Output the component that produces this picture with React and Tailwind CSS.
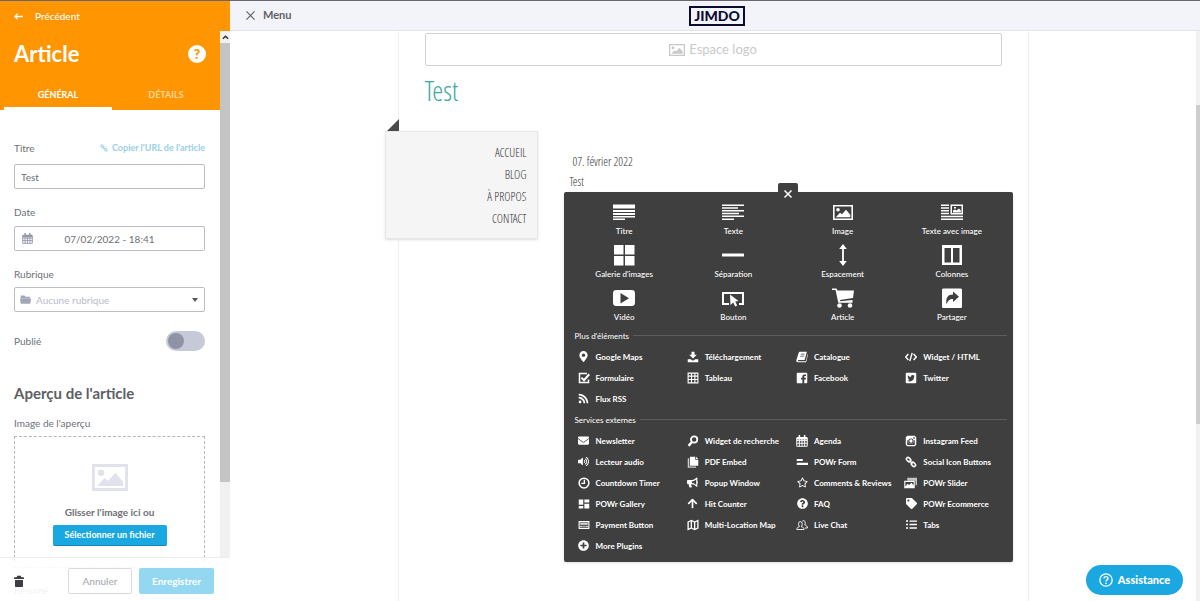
import {
  FaArrowUp,
  FaBullhorn,
  FaEnvelope,
  FaListUl,
  FaMapMarkerAlt,
  FaPlusCircle,
  FaQuestionCircle,
  FaRegStar,
  FaRss,
  FaTag,
  FaVolumeUp,
} from "react-icons/fa";

function Svg({ box = "0 0 16 16", className = "w-3 h-3", children }) {
  return (
    <svg viewBox={box} className={className} fill="currentColor" aria-hidden="true">
      {children}
    </svg>
  );
}

const line = { fill: "none", stroke: "currentColor" };

/* Small icons */
const CheckIcon = () => (
  <Svg>
    <path {...line} strokeWidth="2" d="M12 2H2v12h12v-4" />
    <path {...line} strokeWidth="2.6" d="M4.5 7.5 8 11l7-8" />
  </Svg>
);
const DownloadIcon = () => (
  <Svg>
    <path d="M6 1h4v4h3L8 10 3 5h3zM1 11h4l3 2 3-2h4v4H1z" />
  </Svg>
);
const GridIcon = () => (
  <Svg>
    <path {...line} strokeWidth="1.5" d="M1.5 1.5h13v13h-13zM1.5 5.5h13M1.5 10h13M6 1.5v13M10.500 1.500v13" />
  </Svg>
);
const BookIcon = () => (
  <Svg>
    <path fillRule="evenodd" d="M5 1h9.500L11.500 12H3.200c-1 0-1 1.500 0 1.500H13L15.500 4l.5.5L13.500 15H2.500C.8 15 0 13.500.5 12L3.500 2.500C3.800 1.500 4.300 1 5 1zM6.500 3.500 6.200 4.800h5.200l.4-1.300zM5.800 6.200l-.3 1.200h5.200l.3-1.200z" />
  </Svg>
);
const CodeIcon = () => (
  <Svg>
    <path {...line} strokeWidth="1.900" d="M4.500 4 1 8l3.500 4M11.500 4 15 8l-3.500 4M9.600 2.500 6.400 13.500" />
  </Svg>
);
const FacebookIcon = () => (
  <Svg>
    <path fillRule="evenodd" d="M2.500 1h11C14.500 1 15 1.500 15 2.500v11c0 1-.5 1.500-1.500 1.500H11v-5h2l.3-2.200H11V6.500c0-.8.300-1.200 1.200-1.200h1.200V3.200h-2C9.500 3.200 8.500 4.300 8.500 6v1.800H6.700V10h1.800v5h-6C1.500 15 1 14.500 1 13.500v-11C1 1.500 1.500 1 2.500 1z" />
  </Svg>
);
const TwitterIcon = () => (
  <Svg>
    <path fillRule="evenodd" d="M2 1h12l1 1v12l-1 1H2l-1-1V2zM13 5l-1.200.2.8-1.200-1.400.6c-1.700-1.400-3.600.1-3.200 2C6.300 6.500 5 5.700 4 4.400c-.7 1.200-.3 2.300.6 3L3.500 7.200c.1 1 .8 1.800 1.800 2.100l-.9.1c.3.800 1 1.300 1.900 1.300-.9.700-1.900 1-3.300.9 4.500 2.500 9.300-.4 9-5.300z" />
  </Svg>
);
const SearchIcon = () => (
  <Svg>
    <circle {...line} strokeWidth="2.400" cx="9.500" cy="6" r="4.200" />
    <path {...line} strokeWidth="3" d="M6.500 9.500 2 14.500" />
  </Svg>
);
const CalendarIcon = ({ className }) => (
  <Svg className={className}>
    <path {...line} strokeWidth="1.300" d="M1 4h14v11H1zM1 7.500h14M1 11h14M4.500 5v10M8 5v10M11.500 5v10" />
    <path d="M1 2.500h14V6H1zM3.500 0h2v3h-2zM10.500 0h2v3h-2z" />
  </Svg>
);
const InstagramIcon = () => (
  <Svg>
    <path fillRule="evenodd" d="M3 1h10l2 2v10l-2 2H3l-2-2V3zM11 3v2h2V3zM8 4.500a3.500 3.500 0 1 0 0 7 3.500 3.500 0 0 0 0-7zM3 7v5.500c0 .5.200.7.700.7h8.600c.5 0 .7-.2.700-.7V7h-1.200c.8 3-1.300 5-3.800 5S3.600 10 4.300 7z" />
    <circle cx="8" cy="8" r="2.200" />
  </Svg>
);
const PdfIcon = () => (
  <Svg>
    <path d="M4 1h7v4h4v8H4z" />
    <path d="M12 1l3 3h-3z" />
    <path d="M1 3h2v11h9v1.500H1z" opacity=".75" />
  </Svg>
);
const FormIcon = () => (
  <Svg>
    <path d="M1 4h8v2.500H1zM1 9h15v3H1z" />
  </Svg>
);
const LinkIcon = ({ className }) => (
  <Svg className={className}>
    <rect {...line} strokeWidth="2" x="-3.200" y="-2.100" width="6.400" height="4.200" rx="2" transform="translate(4.800 4.800) rotate(45)" />
    <rect {...line} strokeWidth="2" x="-3.200" y="-2.100" width="6.400" height="4.200" rx="2" transform="translate(11.200 11.200) rotate(45)" />
    <path {...line} strokeWidth="1.800" d="m6 6 4 4" />
  </Svg>
);
const ClockIcon = () => (
  <Svg>
    <circle {...line} strokeWidth="2" cx="8" cy="8" r="6.500" />
    <path {...line} strokeWidth="1.800" d="M8.500 3.500v5H4.500" />
  </Svg>
);
const SliderIcon = () => (
  <Svg box="0 0 18 16" className="w-[14px] h-3">
    <path d="M4 1h13v10h-2V5H4z" opacity=".7" />
    <path fillRule="evenodd" d="M0 5h14v10H0zM1.500 6.500v6l3-3.500 2 1.500 3-3 3 3.500V6.500z" />
  </Svg>
);
const DashboardIcon = () => (
  <Svg>
    <path d="M1 2h6v7H1zM8.500 2H15v4H8.500zM1 10.500h6V14H1zM8.500 7.500H15V14H8.500z" />
  </Svg>
);
const KeyboardIcon = () => (
  <Svg>
    <path {...line} strokeWidth="1.500" d="M1.500 3.500h13v9h-13z" />
    <path d="M3 5h10v2.500H3zM3 9h3v1.500H3zM7 9h2v1.500H7zM10 9h3v1.500h-3z" opacity=".8" />
  </Svg>
);
const MapIcon = () => (
  <Svg>
    <path {...line} strokeWidth="1.800" d="M1.500 4 5.800 2l4.400 2 4.300-2v10l-4.300 2-4.400-2-4.300 2zM5.800 2v10M10.200 4v10" />
  </Svg>
);
const PeopleIcon = () => (
  <Svg>
    <path {...line} strokeWidth="1.200" d="M1 14c0-2.500 1.500-3 3.500-3.700C2.500 7 3 3.500 5.800 3.500s3.300 3.500 1.400 6.800c2 .7 3.600 1.200 3.600 3.700zM8.500 2.800c2.500-1.800 5 .7 3.300 5 1.800.8 3.500 1.500 3.500 4.200H12" />
  </Svg>
);

/* Big icons */
const Picture = ({ className }) => (
  <Svg box="0 0 20 15" className={className}>
    <path fillRule="evenodd" d="M0 0h20v15H0zM1.600 1.600v11.800h16.800V1.600z" />
    <circle cx="5" cy="4.800" r="1.800" />
    <path d="M2.800 12.200 7 7.800l2 1.500 4-4.500 4.300 5v2.400z" />
  </Svg>
);
const big = "w-[22px] h-[22px]";
const TitleIcon = () => (
  <Svg box="0 0 22 22" className={big}>
    <path d="M0 3.500h22v4H0zM0 9h22v2H0zM0 12h22v2H0zM0 15h22v1.500H0zM0 17.500h12v1.500H0z" />
  </Svg>
);
const TextIcon = () => (
  <Svg box="0 0 22 22" className={big}>
    <path d="M0 3.500h22V5H0zM0 6.300h16v1.500H0zM0 9h22v1.500H0zM0 11.800h17v1.500H0zM0 14.600h22v1.500H0zM0 17.500h12V19H0z" />
  </Svg>
);
const PictureIcon = () => (
  <span className="flex items-center h-[22px]">
    <Picture className="w-5 h-[15px]" />
  </span>
);
const TextPictureIcon = () => (
  <Svg box="0 0 22 22" className={big}>
    <path d="M0 3.500h8V5H0zM0 6.300h8v1.500H0zM0 9h8v1.500H0zM0 11.800h8v1.500H0zM0 14.800h22v1.500H0zM0 17.500h22V19H0z" />
    <path fillRule="evenodd" d="M9.500 3.500H22v10H9.500zM11 5v7h9.500V5z" />
    <path d="M12 11.500v-2l2-1 1.500 1L18 7.500l1.800 2v2zM13 6h2v1.500h-2z" />
  </Svg>
);
const GalleryIcon = () => (
  <Svg box="0 0 22 22" className={big}>
    <path d="M1 1h9.500v9.500H1zM12 1h9.500v9.500H12zM1 12h9.500v9.500H1zM12 12h9.500v9.500H12z" />
  </Svg>
);
const DividerIcon = () => (
  <Svg box="0 0 22 22" className={big}>
    <rect y="9.500" width="22" height="3" rx=".6" />
  </Svg>
);
const SpacingIcon = () => (
  <Svg box="0 0 22 22" className={big}>
    <path d="M11 0l3.800 5h-2.900v12h2.900L11 22l-3.800-5h2.900V5H7.200z" />
  </Svg>
);
const ColumnsIcon = () => (
  <Svg box="0 0 22 22" className={big}>
    <path fillRule="evenodd" d="M1 1h20v20H1zM3.500 4v14.500H10V4zM12 4v14.500h6.500V4z" />
  </Svg>
);
const VideoIcon = () => (
  <Svg box="0 0 22 22" className={big}>
    <path fillRule="evenodd" d="M3.500 3h15C21 3 22 4 22 6.500v9c0 2.500-1 3.500-3.500 3.500h-15C1 19 0 18 0 15.500v-9C0 4 1 3 3.500 3zM7.500 6v10.500L16 11.200z" />
  </Svg>
);
const ButtonIcon = () => (
  <Svg box="0 0 22 22" className={big}>
    <path {...line} strokeWidth="2" d="M7 17H1V6h20v11h-4" />
    <path d="M8 7.500 16.500 14l-3.300.4 2 4-2 1-2-4L8.500 18z" />
  </Svg>
);
const CartIcon = () => (
  <Svg box="0 0 22 22" className={big}>
    <path d="M0 1.500h4.500L5.500 3.500H22l-1 7.500L8 13l.3 1.200L20.500 13v2.800H6.300L3.500 3H0z" />
    <circle cx="7.500" cy="18.500" r="2.300" />
    <circle cx="18" cy="18.500" r="2.300" />
  </Svg>
);
const ShareIcon = () => (
  <Svg box="0 0 22 22" className={big}>
    <path fillRule="evenodd" d="M2.500 1.500h17c1 0 1.500.5 1.500 1.500v16.500c0 1-.5 1.500-1.500 1.500h-17C1.500 21 1 20.500 1 19.500V3c0-1 .5-1.500 1.500-1.500zM12 4.500v3C7 7.500 4.500 10.500 5.500 17.500 7 13.500 8.500 12 12 12v3l6-5.200z" />
  </Svg>
);

const MAIN_ELEMENTS = [
  ["Titre", TitleIcon],
  ["Texte", TextIcon],
  ["Image", PictureIcon],
  ["Texte avec image", TextPictureIcon],
  ["Galerie d'images", GalleryIcon],
  ["Séparation", DividerIcon],
  ["Espacement", SpacingIcon],
  ["Colonnes", ColumnsIcon],
  ["Vidéo", VideoIcon],
  ["Bouton", ButtonIcon],
  ["Article", CartIcon],
  ["Partager", ShareIcon],
];

const MORE_ELEMENTS = [
  ["Google Maps", FaMapMarkerAlt],
  ["Téléchargement", DownloadIcon],
  ["Catalogue", BookIcon],
  ["Widget / HTML", CodeIcon],
  ["Formulaire", CheckIcon],
  ["Tableau", GridIcon],
  ["Facebook", FacebookIcon],
  ["Twitter", TwitterIcon],
  ["Flux RSS", FaRss],
];

const SERVICES = [
  ["Newsletter", FaEnvelope],
  ["Widget de recherche", SearchIcon],
  ["Agenda", CalendarIcon],
  ["Instagram Feed", InstagramIcon],
  ["Lecteur audio", FaVolumeUp],
  ["PDF Embed", PdfIcon],
  ["POWr Form", FormIcon],
  ["Social Icon Buttons", LinkIcon],
  ["Countdown Timer", ClockIcon],
  ["Popup Window", FaBullhorn],
  ["Comments & Reviews", FaRegStar],
  ["POWr Slider", SliderIcon],
  ["POWr Gallery", DashboardIcon],
  ["Hit Counter", FaArrowUp],
  ["FAQ", FaQuestionCircle],
  ["POWr Ecommerce", FaTag],
  ["Payment Button", KeyboardIcon],
  ["Multi-Location Map", MapIcon],
  ["Live Chat", PeopleIcon],
  ["Tabs", FaListUl],
  ["More Plugins", FaPlusCircle],
];

function Section({ title, items }) {
  return (
    <section>
      <div className="flex items-center gap-1 h-[21px] pl-[5px]">
        <h3 className="text-[8px]">{title}</h3>
        <span className="flex-1 h-px bg-[#5c5c5c]" />
      </div>
      <div className="grid grid-cols-4">
        {items.map(([label, Icon]) => (
          <button key={label} className="flex items-center gap-1 h-[21px] pl-[6px] text-left">
            <span className="flex justify-center w-4 text-[11px] shrink-0">
              <Icon />
            </span>
            <span className="text-[8px] font-bold whitespace-nowrap">{label}</span>
          </button>
        ))}
      </div>
    </section>
  );
}

function ElementPicker() {
  return (
    <div className="relative bg-[#3f3f3f] text-white rounded-xs px-[6px] pt-[9px] pb-[6px] shadow-sm font-['Lato',sans-serif] font-normal">
      <button
        aria-label="Fermer"
        className="absolute -top-[9px] left-1/2 -translate-x-1/2 w-5 h-[18px] bg-[#3f3f3f] rounded-t-xs flex items-center justify-center"
      >
        <Svg box="0 0 10 10" className="w-[10px] h-[10px] mt-[3px]">
          <path {...line} strokeWidth="1.500" d="m1.500 1.500 7 7m0-7-7 7" />
        </Svg>
      </button>
      <div className="grid grid-cols-4">
        {MAIN_ELEMENTS.map(([label, Icon]) => (
          <button key={label} className="flex flex-col items-center h-[43px]">
            <Icon />
            <span className="text-[8px] leading-3 mt-[2px] font-medium">{label}</span>
          </button>
        ))}
      </div>
      <div className="mt-[-5px]">
        <Section title="Plus d'éléments" items={MORE_ELEMENTS} />
        <Section title="Services externes" items={SERVICES} />
      </div>
    </div>
  );
}

const field = "w-full h-[25px] border border-[#b9bcc9] rounded-xs bg-white text-[10px] text-[#6d7077] outline-none";

function Sidebar() {
  return (
    <aside className="relative flex flex-col w-[230px] shrink-0 bg-white">
      <div className="h-[30px] shrink-0 bg-[#ff9500] text-white">
        <a href="#retour" className="flex items-center gap-3 h-full px-[14px] text-[10px] font-medium">
          <Svg box="0 0 10 10" className="w-[9px] h-[9px]">
            <path {...line} strokeWidth="1.400" d="M10 5H1.500M4 2 1 5l3 3" />
          </Svg>
          Précédent
        </a>
      </div>

      <div className="flex flex-1 min-h-0">
        <div className="flex-1 overflow-hidden">
          <header className="bg-[#ff9500] text-white pt-[9px]">
            <div className="flex items-center justify-between h-7 px-[14px]">
              <h1 className="text-[22px] leading-7 font-bold">Article</h1>
              <button
                aria-label="Aide"
                className="w-[18px] h-[18px] rounded-full bg-white text-[#ff9500] text-[14px] leading-none font-black flex items-center justify-center"
              >
                ?
              </button>
            </div>
            <div className="grid grid-cols-2 mt-[13px] pl-1 text-[9px] font-bold">
              <button className="h-[29px] pt-px border-b-3 border-white">GÉNÉRAL</button>
              <button className="h-[29px] pt-px border-b-3 border-transparent text-[#ffd699]">DÉTAILS</button>
            </div>
          </header>

          <form className="px-[14px] pt-[30px] text-[10px] leading-4 text-[#6d7077]">
            <div className="flex items-center justify-between pr-px">
              <label htmlFor="titre">Titre</label>
              <a href="#copier" className="flex items-center gap-1 text-[9px] font-bold text-[#98d1e8]">
                <LinkIcon className="w-2 h-2" />
                Copier l'URL de l'article
              </a>
            </div>
            <div className="mt-2 pr-px">
              <input id="titre" defaultValue="Test" className={`${field} px-[6px]`} />
            </div>

            <label htmlFor="date" className="block mt-[15px]">Date</label>
            <div className="relative mt-[6px] pr-px">
              <input id="date" defaultValue="07/02/2022 - 18:41" className={`${field} text-center`} />
              <span className="absolute left-2 top-[7px] text-[#9497a8]">
                <CalendarIcon className="w-[11px] h-[11px]" />
              </span>
            </div>

            <label htmlFor="rubrique" className="block mt-[15px]">Rubrique</label>
            <div className="relative mt-[5px] pr-px">
              <select id="rubrique" className={`${field} appearance-none pl-[21px] text-[#b9bcc9]`}>
                <option>Aucune rubrique</option>
              </select>
              <Svg className="absolute left-[6px] top-[7px] w-[11px] h-[11px] text-[#a2a5b5] pointer-events-none">
                <path d="M1 2h5.500l1.500 2h6.500v2H1zM0 6.500h16L15 14H1z" />
              </Svg>
              <Svg box="0 0 6 4" className="absolute right-2 top-[11px] w-[6px] h-1 text-[#555860] pointer-events-none">
                <path d="M0 0h6L3 4z" />
              </Svg>
            </div>

            <div className="flex items-center justify-between mt-[19px] pr-px">
              <label htmlFor="publie">Publié</label>
              <input
                id="publie"
                type="checkbox"
                className="appearance-none flex items-center w-[39px] h-5 rounded-full bg-[#c6c9d8] pl-[2px] before:content-[''] before:w-4 before:h-4 before:rounded-full before:bg-[#8f93a7]"
              />
            </div>

            <h2 className="mt-[30px] text-[15px] leading-6 font-bold text-[#5c5f66]">Aperçu de l'article</h2>
            <label htmlFor="apercu" className="block mt-[10px]">Image de l'aperçu</label>
            <div className="flex flex-col items-center h-[132px] mt-[5px] mr-px pt-[27px] border border-dashed border-[#b5b5bd]">
              <Picture className="w-9 h-[27px] text-[#e1e3ec]" />
              <span className="mt-[13px] leading-4 font-bold">Glisser l'image ici ou</span>
              <button
                id="apercu"
                type="button"
                className="mt-[5px] w-[114px] h-[21px] rounded-xs bg-[#1ba8e0] border-b border-[#1687b5] text-white text-[9px] font-bold"
              >
                Sélectionner un fichier
              </button>
            </div>
            <p className="mt-[14px]">Résumé</p>
          </form>
        </div>

        <div className="flex flex-col w-[10px] bg-[#f1f1f1]">
          <div className="h-3 flex items-center justify-center text-[#333]">
            <Svg box="0 0 8 8" className="w-[7px] h-[7px]">
              <path {...line} strokeWidth="1.700" d="M1 5.500 4 2.500l3 3" />
            </Svg>
          </div>
          <div className="h-[77%] bg-[#c4c4c4]" />
        </div>
      </div>

      <footer className="absolute inset-x-0 bottom-0 flex items-center h-[44px] pt-[3px] pl-[14px] pr-4 bg-white/90 border-t border-[#ececf2]">
        <button aria-label="Supprimer">
          <Svg box="0 0 10 12" className="w-[10px] h-3 text-[#3c3e43]">
            <path d="M1 5h8v6c0 .6-.4 1-1 1H2c-.6 0-1-.4-1-1zM0 2.500 3 2V.7h4V2l3 .5V4H0z" />
          </Svg>
        </button>
        <button className="ml-auto w-16 h-[26px] border border-[#d9dbe3] rounded-xs bg-white text-[10px] font-medium text-[#a8abb3]">
          Annuler
        </button>
        <button className="ml-[7px] w-[75px] h-[26px] rounded-xs bg-[#93d7f1] text-[10px] font-bold text-white">
          Enregistrer
        </button>
      </footer>
    </aside>
  );
}

const condensed = "font-['Open_Sans_Condensed_Light','Open_Sans_Condensed','Open_Sans',sans-serif] font-light";

export default function App() {
  return (
    <div className="flex h-screen overflow-hidden border-t border-[#6b6570] bg-white font-['Lato',sans-serif]">
      <Sidebar />

      <div className="flex flex-col flex-1 min-w-0">
        <header className="relative flex items-center h-[30px] shrink-0 px-4 bg-[#f3f4f9] border-b border-[#e3e4ea]">
          <button className="flex items-center gap-2 text-[11px] font-bold text-[#5f6168]">
            <Svg box="0 0 10 10" className="w-[9px] h-[9px]">
              <path {...line} strokeWidth="1.300" d="m.5.5 9 9m0-9-9 9" />
            </Svg>
            Menu
          </button>
          <a
            href="#jimdo"
            className="absolute left-1 right-0 mx-auto flex items-center justify-center w-14 h-5 border-2 border-[#0b0b30] text-[#0b0b30] text-[14px] leading-none font-black"
          >
            JIMDO
          </a>
        </header>

        <div className="flex flex-1 min-h-0">
          <main className="flex-1 min-w-0 overflow-hidden">
            <div className="w-full max-w-[631px] h-full mx-auto px-[26px] pt-[2px] border-x border-[#f0f0f0]">
              <div className="flex items-center justify-center gap-1 h-[33px] border border-[#d2d2d2] rounded-xs text-[13px] text-[#c9c9c9]">
                <Picture className="w-4 h-3" />
                Espace logo
              </div>
              <h1 className={`mt-2 text-[28px] leading-8 text-[#3fa99c] ${condensed}`}>Test</h1>

              <div className="flex items-start mt-[13px] -ml-[40px] -mr-[11px]">
                <div className="w-[153px] shrink-0">
                  <Svg box="0 0 12 12" className="block w-3 h-3 ml-[2px] text-[#4a4a4a]">
                    <path d="M12 0v12H0z" />
                  </Svg>
                  <nav className="flex flex-col items-end h-[108px] pt-[10px] pr-[10px] bg-[#f5f5f5] border border-[#e8e8e8] shadow-sm">
                    {["ACCUEIL", "BLOG", "À PROPOS", "CONTACT"].map((item) => (
                      <a key={item} href="#page" className={`text-[12px] leading-[22px] text-[#333] ${condensed}`}>
                        {item}
                      </a>
                    ))}
                  </nav>
                </div>
                <article className={`flex-1 ml-[26px] pt-[33px] text-[12px] leading-5 text-[#333] ${condensed}`}>
                  <p className="pl-[9px]">07. février 2022</p>
                  <p className="pl-[6px]">Test</p>
                  <ElementPicker />
                </article>
              </div>
            </div>
          </main>
          <div className="flex flex-col w-1 bg-[#f1f1f1]">
            <div className="h-[13%]" />
            <div className="h-[56%] bg-[#cdcdcd]" />
          </div>
        </div>
      </div>

      <button className="fixed right-[17px] bottom-[6px] flex items-center justify-center gap-[5px] w-[97px] h-[30px] rounded-full bg-[#1ba8e0] text-white text-[11px] font-black">
        <Svg box="0 0 14 14" className="w-[14px] h-[14px]">
          <circle {...line} strokeWidth="1.300" cx="7" cy="7" r="6.200" />
          <path {...line} strokeWidth="1.300" d="M5 5.600c0-2.600 4-2.600 4 0C9 7 7 6.800 7 8.500" />
          <circle cx="7" cy="10.300" r=".9" />
        </Svg>
        Assistance
      </button>
    </div>
  );
}
